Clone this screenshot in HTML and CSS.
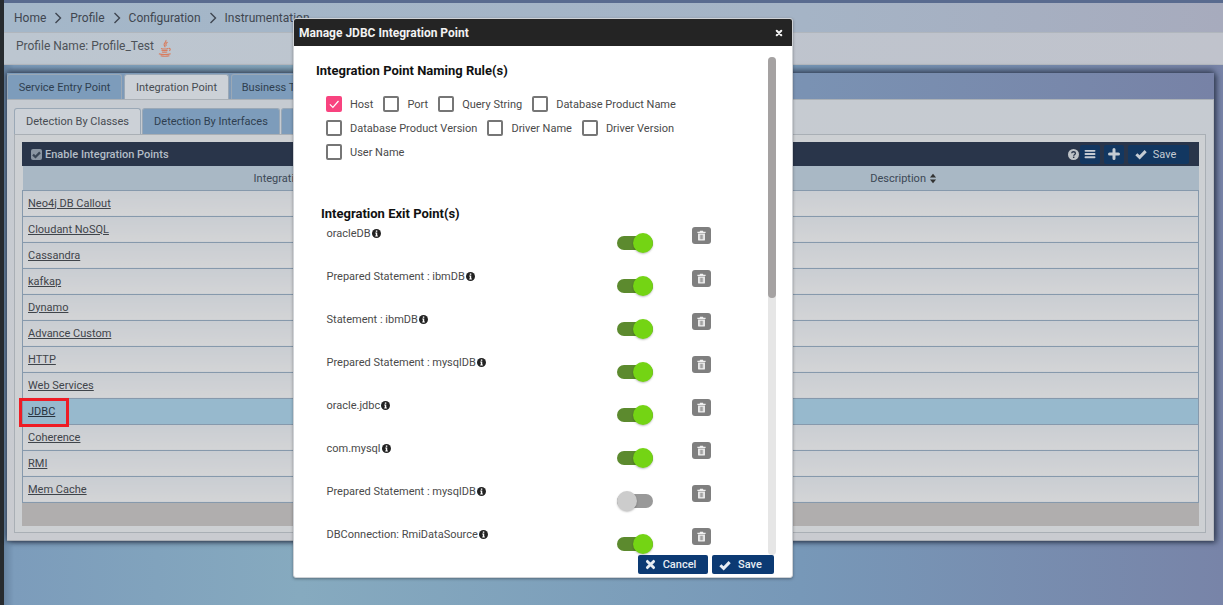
FILE: index.html
```html
<!DOCTYPE html>
<html lang="en">
<head>
<meta charset="utf-8">
<title>Manage JDBC Integration Point</title>
<link rel="stylesheet" href="styles.css">
</head>
<body>
<svg class="defs" width="0" height="0" aria-hidden="true">
  <defs>
    <symbol id="i-check" viewBox="0 0 16 16"><path d="M1.800 8.300 6.200 12.500 14.200 4.200" fill="none" stroke="currentColor" stroke-width="4"/></symbol>
    <symbol id="i-times" viewBox="0 0 16 16"><path d="M3.500 3.500 12.500 12.500M12.500 3.500 3.500 12.500" fill="none" stroke="currentColor" stroke-width="4.200" stroke-linecap="round"/></symbol>
    <symbol id="i-chevron" viewBox="0 0 8 12"><path d="M1.500 1 6.500 6 1.500 11" fill="none" stroke="currentColor" stroke-width="1.400"/></symbol>
    <symbol id="i-bars" viewBox="0 0 16 16"><path d="M2 2.500h12a1 1 0 0 1 0 2.600H2a1 1 0 0 1 0-2.600zM2 6.700h12a1 1 0 0 1 0 2.600H2a1 1 0 0 1 0-2.600zM2 10.900h12a1 1 0 0 1 0 2.600H2a1 1 0 0 1 0-2.600z" fill="currentColor"/></symbol>
    <symbol id="i-plus" viewBox="0 0 16 16"><path d="M2 8h12M8 2v12" fill="none" stroke="currentColor" stroke-width="4" stroke-linecap="round"/></symbol>
    <symbol id="i-help" viewBox="0 0 16 16"><circle cx="8" cy="8" r="8" fill="currentColor"/><path d="M5.300 6.200C5.500 4.600 6.700 4 8 4c1.600 0 2.800 1 2.800 2.300 0 2-2.500 2-2.500 3.600" fill="none" stroke="#29354a" stroke-width="1.900"/><rect x="7.200" y="11" width="2.100" height="2.100" fill="#29354a"/></symbol>
    <symbol id="i-info" viewBox="0 0 16 16"><circle cx="8" cy="8" r="8" fill="currentColor"/><rect x="6.800" y="2.600" width="2.600" height="2.400" fill="#fff"/><path d="M5.800 6.300h3.500v5.300h1.100v1.800H5.800v-1.800h1v-3.500h-1z" fill="#fff"/></symbol>
    <symbol id="i-trash" viewBox="0 0 16 16"><path d="M6 1h4l.8 1.600H14v1.600H2V2.600h3.200zM3 5.200h10V14a1.300 1.300 0 0 1-1.300 1.300H4.300A1.300 1.300 0 0 1 3 14zM5.600 6.800v6.700h1V6.800zM7.500 6.800v6.700h1V6.800zM9.400 6.800v6.700h1V6.800z" fill="currentColor" fill-rule="evenodd"/></symbol>
    <symbol id="i-caret" viewBox="0 0 10 16"><path d="M5 1 9.500 6.500H.5zM5 15 .5 9.500H9.500z" fill="currentColor"/></symbol>
  </defs>
</svg>

<div class="strip"></div>
<div class="page">
  <div class="topline"></div>
  <nav class="crumbs">
    <span>Home</span><svg class="sep" width="8" height="12"><use href="#i-chevron"/></svg>
    <span>Profile</span><svg class="sep" width="8" height="12"><use href="#i-chevron"/></svg>
    <span>Configuration</span><svg class="sep" width="8" height="12"><use href="#i-chevron"/></svg>
    <span>Instrumentation</span>
  </nav>
  <div class="profile">
    <span>Profile Name: Profile_Test</span>
    <svg class="java" viewBox="0 0 16 20" width="14" height="18" aria-hidden="true">
      <path d="M9 1C10 3 6.500 4.500 7 6.500 7.300 7.500 8 8 8 9M11 3.500C9 4.500 8.500 6 9.500 7.500" fill="none" stroke="currentColor" stroke-width="1.300"/>
      <path d="M3.500 10.500c2 .6 6 .6 8 0M4 12.500c2 .6 5 .6 7 0M4.500 14.500c2 .5 4 .5 6 0M12 10.500c2-.5 3 1.500 .8 2.800" fill="none" stroke="currentColor" stroke-width="1.200"/>
      <path d="M1 16.500c3 1.300 10 1.300 13.500 0M3 18.800c3 .7 7 .7 10 0" fill="none" stroke="currentColor" stroke-width="1.200"/>
    </svg>
  </div>

  <section class="panel">
    <div class="tabs outer-tabs">
      <span class="tab tab-a">Service Entry Point</span>
      <span class="tab tab-b is-active">Integration Point</span>
      <span class="tab tab-c">Business Transactions</span>
    </div>
    <div class="panel-body">
      <div class="tabs inner-tabs">
        <span class="tab tab-d is-active">Detection By Classes</span>
        <span class="tab tab-e">Detection By Interfaces</span>
        <span class="tab tab-f">Other</span>
      </div>
      <div class="frame">
        <div class="toolbar">
          <span class="enable"><span class="enable-box"><svg width="9" height="9"><use href="#i-check"/></svg></span>Enable Integration Points</span>
          <span class="tools">
            <svg class="help" width="11" height="11"><use href="#i-help"/></svg>
            <span class="tool tool-sq"><svg width="12" height="12"><use href="#i-bars"/></svg></span>
            <span class="tool tool-sq tool-plus"><svg width="12" height="12"><use href="#i-plus"/></svg></span>
            <span class="tool tool-save"><svg width="12" height="12"><use href="#i-check"/></svg>Save</span>
          </span>
        </div>
        <table class="grid">
          <thead>
            <tr><th>Integration Point Name <svg width="8" height="11"><use href="#i-caret"/></svg></th><th>Description <svg width="8" height="11"><use href="#i-caret"/></svg></th></tr>
          </thead>
          <tbody>
            <tr><td><a>Neo4j DB Callout</a></td><td></td></tr>
            <tr><td><a>Cloudant NoSQL</a></td><td></td></tr>
            <tr><td><a>Cassandra</a></td><td></td></tr>
            <tr><td><a>kafkap</a></td><td></td></tr>
            <tr><td><a>Dynamo</a></td><td></td></tr>
            <tr><td><a>Advance Custom</a></td><td></td></tr>
            <tr><td><a>HTTP</a></td><td></td></tr>
            <tr><td><a>Web Services</a></td><td></td></tr>
            <tr class="is-selected"><td><a>JDBC</a><span class="callout"></span></td><td></td></tr>
            <tr><td><a>Coherence</a></td><td></td></tr>
            <tr><td><a>RMI</a></td><td></td></tr>
            <tr><td><a>Mem Cache</a></td><td></td></tr>
          </tbody>
        </table>
        <div class="grid-foot"></div>
      </div>
    </div>
  </section>
</div>

<div class="modal">
  <header class="modal-head">
    <span>Manage JDBC Integration Point</span>
    <svg width="8" height="8"><use href="#i-times"/></svg>
  </header>
  <div class="modal-main">
    <div class="modal-body">
      <h2 class="rule-title">Integration Point Naming Rule(s)</h2>
      <div class="checks">
        <label class="check"><span class="box is-on"><svg width="12" height="12" viewBox="0 0 16 16"><path d="M2.500 8.500 6.500 12.500 14 4" fill="none" stroke="#fff" stroke-width="1.600"/></svg></span>Host</label>
        <label class="check"><span class="box"></span>Port</label>
        <label class="check"><span class="box"></span>Query String</label>
        <label class="check"><span class="box"></span>Database Product Name</label>
        <label class="check"><span class="box"></span>Database Product Version</label>
        <label class="check"><span class="box"></span>Driver Name</label>
        <label class="check"><span class="box"></span>Driver Version</label>
        <label class="check"><span class="box"></span>User Name</label>
      </div>
      <h2 class="exit-title">Integration Exit Point(s)</h2>
      <div class="exit"><span class="exit-name">oracleDB<svg width="9" height="9"><use href="#i-info"/></svg></span><span class="toggle"></span><span class="trash"><svg width="11" height="11"><use href="#i-trash"/></svg></span></div>
      <div class="exit"><span class="exit-name">Prepared Statement : ibmDB<svg width="9" height="9"><use href="#i-info"/></svg></span><span class="toggle"></span><span class="trash"><svg width="11" height="11"><use href="#i-trash"/></svg></span></div>
      <div class="exit"><span class="exit-name">Statement : ibmDB<svg width="9" height="9"><use href="#i-info"/></svg></span><span class="toggle"></span><span class="trash"><svg width="11" height="11"><use href="#i-trash"/></svg></span></div>
      <div class="exit"><span class="exit-name">Prepared Statement : mysqlDB<svg width="9" height="9"><use href="#i-info"/></svg></span><span class="toggle"></span><span class="trash"><svg width="11" height="11"><use href="#i-trash"/></svg></span></div>
      <div class="exit"><span class="exit-name">oracle.jdbc<svg width="9" height="9"><use href="#i-info"/></svg></span><span class="toggle"></span><span class="trash"><svg width="11" height="11"><use href="#i-trash"/></svg></span></div>
      <div class="exit"><span class="exit-name">com.mysql<svg width="9" height="9"><use href="#i-info"/></svg></span><span class="toggle"></span><span class="trash"><svg width="11" height="11"><use href="#i-trash"/></svg></span></div>
      <div class="exit"><span class="exit-name">Prepared Statement : mysqlDB<svg width="9" height="9"><use href="#i-info"/></svg></span><span class="toggle is-off"></span><span class="trash"><svg width="11" height="11"><use href="#i-trash"/></svg></span></div>
      <div class="exit"><span class="exit-name">DBConnection: RmiDataSource<svg width="9" height="9"><use href="#i-info"/></svg></span><span class="toggle"></span><span class="trash"><svg width="11" height="11"><use href="#i-trash"/></svg></span></div>
    </div>
    <div class="scrollbar"><div class="scroll-thumb"></div></div>
  </div>
  <footer class="modal-foot">
    <button class="btn btn-cancel"><svg width="11" height="11"><use href="#i-times"/></svg>Cancel</button>
    <button class="btn btn-save"><svg width="12" height="12"><use href="#i-check"/></svg>Save</button>
  </footer>
</div>
</body>
</html>
```
FILE: styles.css
```css
* { box-sizing: border-box; }
html, body { margin: 0; height: 100%; }
body {
  position: relative;
  display: flex;
  width: 1223px;
  height: 605px;
  overflow: hidden;
  font-family: Roboto, "Liberation Sans", sans-serif;
  font-size: 11px;
  color: #3f444a;
  background: linear-gradient(90deg, #5f7a98 0, #7c9cbb 14px, #86aabf 300px, #7798b8 800px, #7884a8 1223px);
}
.defs { position: absolute; }
.strip { flex: 0 0 4px; background: #272b2f; }
.page { flex: 1; display: flex; flex-direction: column; min-width: 0; }
.topline { height: 3px; background: #596b8f; }

.crumbs {
  height: 29px;
  display: flex;
  align-items: center;
  padding: 1px 0 0 10px;
  font-size: 12px;
  color: #3f4650;
  background: linear-gradient(90deg, #a4b7c9, #a5b4c6 800px, #a7abbd);
}
.sep { margin: 0 8px; }

.profile {
  height: 33px;
  display: flex;
  align-items: center;
  gap: 4px;
  padding: 0 0 5px 12px;
  font-size: 12px;
  color: #4d5258;
  background: linear-gradient(90deg, #bcc6d0, #c0c3cc);
  border-top: 1px solid #b0b6bd;
  border-bottom: 1px solid #b4b9c0;
}
.java { color: #d87c5e; margin-top: 4px; }

.panel {
  margin: 8px 9px 0 3px;
  height: 468px;
  display: flex;
  flex-direction: column;
  background: linear-gradient(90deg, #7d9bb9, #7a92b3 800px, #7782a6);
  box-shadow: 0 -3px 6px rgba(40, 50, 70, .7), 3px 2px 5px rgba(40, 50, 70, .6), -1px 1px 3px rgba(40, 50, 70, .5);
}
.tabs { display: flex; }
.outer-tabs { height: 27px; padding-top: 1px; gap: 2px; }
.tab {
  display: flex;
  align-items: center;
  justify-content: center;
  background: #7d9cbb;
  color: #2f3f50;
  border: 1px solid #9aa8b6;
  border-bottom: 0;
  border-radius: 3px 3px 0 0;
}
.tab.is-active { background: #ccd1d7; color: #474c52; }
.tab-a { width: 115px; }
.tab-b { width: 105px; }
.tab-c { width: 132px; }
.tab-d { width: 127px; }
.tab-e { width: 138px; margin-left: 1px; }
.tab-f { width: 100px; margin-left: 1px; }

.panel-body {
  flex: 1;
  display: flex;
  flex-direction: column;
  padding: 8px 7px 7px;
  background: linear-gradient(#c6cbd1, #c9cbd0);
  border-top: 1px solid #aab0b6;
  border-right: 1px solid #b5b9bf;
  border-bottom: 1px solid #a9adb3;
}
.inner-tabs { height: 26px; }
.frame {
  height: 399px;
  padding: 7px 6px 0 7px;
  background: #cdd0d3;
  border: 1px solid #a9afb5;
}
.toolbar {
  height: 24px;
  display: flex;
  align-items: center;
  justify-content: space-between;
  padding: 0 10px 0 9px;
  background: #29354a;
  color: #b4bdc6;
  font-weight: 500;
}
.enable { display: flex; align-items: center; gap: 3px; }
.enable-box {
  width: 11px;
  height: 11px;
  display: flex;
  align-items: center;
  justify-content: center;
  background: #8a95a2;
  color: #3a4656;
  border-radius: 2px;
}
.tools { display: flex; align-items: center; }
.help { color: #bfc3c7; margin-right: 1px; }
.tool {
  height: 19px;
  display: flex;
  align-items: center;
  justify-content: center;
  background: #123761;
  color: #c5ccd3;
  border-radius: 2px;
}
.tool-sq { width: 20px; }
.tool-plus { margin: 0 4px; }
.tool-save { width: 61px; gap: 6px; padding-right: 6px; font-weight: 400; }

.grid {
  width: 100%;
  border-collapse: collapse;
  table-layout: fixed;
}
.grid th {
  height: 24px;
  padding: 1px 0 0;
  font-weight: 400;
  color: #3c4855;
  background: #a9b8c5;
  border-bottom: 1px solid #8699ac;
}
.grid th svg { vertical-align: -2px; color: #333; }
.grid th:first-child { width: 586px; }
.grid td {
  height: 26px;
  padding: 0 0 0 5px;
  background: linear-gradient(#c9cdd2, #d3d4d6);
  border-bottom: 1px solid #8699ac;
}
.grid td:first-child { position: relative; border-left: 1px solid #8699ac; }
.grid td:last-child { border-right: 1px solid #8699ac; }
.grid a { color: #3f444a; text-decoration: underline; }
.is-selected td { background: #97b9cd; }
.is-selected a { color: #26323d; }
.callout {
  position: absolute;
  z-index: 1;
  left: -4px;
  top: -1px;
  width: 50px;
  height: 29px;
  border: 3px solid #ee1c25;
}
.grid-foot { height: 23px; background: #b0aeae; }

.modal {
  position: absolute;
  left: 293px;
  top: 18px;
  width: 500px;
  height: 560px;
  display: flex;
  flex-direction: column;
  background: #fff;
  border: 1px solid #cfd2d6;
  border-radius: 3px;
  box-shadow: 0 1px 3px rgba(0, 0, 0, .35);
  color: #4a4a4a;
}
.modal-head {
  flex: 0 0 27px;
  display: flex;
  align-items: center;
  justify-content: space-between;
  padding: 0 9px 0 5px;
  background: #242424;
  color: #f2f2f2;
  font-size: 12px;
  font-weight: 700;
  border-radius: 2px 2px 0 0;
}
.modal-main {
  flex: 1;
  min-height: 0;
  display: flex;
  padding-top: 11px;
}
.modal-body { flex: 1; min-width: 0; overflow: hidden; padding: 6px 0 0 22px; }
.rule-title, .exit-title {
  margin: 0;
  color: #111;
  font-size: 13px;
  font-weight: 700;
  line-height: 16px;
}
.checks {
  display: flex;
  flex-wrap: wrap;
  width: 420px;
  gap: 8px 10px;
  margin: 17px 0 0 10px;
}
.check { display: flex; align-items: center; gap: 8px; height: 16px; }
.box {
  width: 16px;
  height: 16px;
  display: flex;
  align-items: center;
  justify-content: center;
  border: 2px solid #767676;
  border-radius: 2px;
}
.box.is-on { background: #f8437f; border-color: #f8437f; }
.exit-title { margin: 46px 0 0 5px; }
.exit {
  display: flex;
  height: 43px;
  padding: 5px 0 0 10.500px;
  line-height: 14px;
}
.exit-name { width: 290.500px; }
.exit-name svg { color: #222; margin-left: 1px; vertical-align: -1px; }
.toggle {
  position: relative;
  width: 36px;
  height: 14px;
  margin-top: 9px;
  border-radius: 7px;
  background: #5c8a2e;
}
.toggle::after {
  content: "";
  position: absolute;
  top: -3px;
  right: 0;
  width: 20px;
  height: 20px;
  border-radius: 50%;
  background: #74d414;
  box-shadow: 0 1px 2px rgba(0, 0, 0, .25);
}
.toggle.is-off { background: #999; }
.toggle.is-off::after { left: 0; right: auto; background: #ccc; }
.trash {
  width: 19px;
  height: 17px;
  margin: 0 0 0 39px;
  display: flex;
  align-items: center;
  justify-content: center;
  background: #7f7f7f;
  color: #f0f0f0;
  border-radius: 3px;
}
.scrollbar {
  flex: 0 0 8px;
  margin: 0 16px 0 0;
  background: #e6e6e6;
  border-radius: 4px;
}
.scroll-thumb { height: 241px; background: #a5a2a2; border-radius: 4px; }
.modal-foot {
  flex: 0 0 22px;
  display: flex;
  justify-content: flex-end;
  gap: 4px;
  padding: 0 18px 3px 0;
}
.btn {
  height: 19px;
  display: flex;
  align-items: center;
  justify-content: center;
  gap: 7px;
  padding: 0 5px 0 0;
  border: 0;
  border-radius: 2px;
  background: #0c3a73;
  color: #e8edf3;
  font-family: inherit;
  font-size: 11px;
  font-weight: 500;
}
.btn-cancel { width: 70px; }
.btn-save { width: 62px; }
```
